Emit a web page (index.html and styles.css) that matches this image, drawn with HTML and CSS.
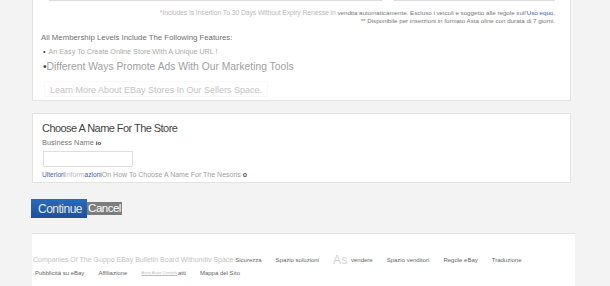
FILE: index.html
```html
<!DOCTYPE html>
<html>
<head>
  <meta charset="UTF-8">
  <title>Apri un negozio eBay</title>
  <link rel="stylesheet" href="styles.css">
</head>
<body>
  <div class="page">
    <!-- Membership levels (top of card is scrolled off) -->
    <div class="card card-levels">
      <div class="plans">
        <div class="plan plan-wide"></div>
        <div class="plan plan-narrow"></div>
      </div>

      <div class="note">
        <div><span class="faint">*Includes Is Insertion To 30 Days Without Expiry Renesse in</span> vendita automaticamente. Escluso i veicoli e soggetto alle regole sull'<a href="#">Uso equo.</a></div>
        <div>** Disponibile per inserzioni in formato Asta oline con durata di 7 giorni.</div>
      </div>

      <div class="features-title">All Membership Levels Include The Following Features:</div>
      <ul class="features">
        <li class="feature-small">An Easy To Create Online Store With A Unique URL !</li>
        <li class="feature-big">Different Ways Promote Ads With Our Marketing Tools</li>
      </ul>

      <div class="learn-more">Learn More About EBay Stores In Our Sellers Space.</div>
    </div>

    <!-- Store name form -->
    <div class="card card-name">
      <h2>Choose A Name For The Store</h2>
      <label class="field-label" for="storeName">Business Name <b>io</b></label>
      <input class="field-input" id="storeName" type="text">
      <div class="help">
        <a href="#">Ulteriori</a><span class="faint">Inform</span><a href="#">azioni</a><span>On How To Choose A Name For The Nesoris</span> <b>o</b>
      </div>
    </div>

    <div class="actions">
      <button class="btn btn-continue">Continue</button>
      <button class="btn btn-cancel">Cancel</button>
    </div>

    <!-- Footer links -->
    <div class="footer">
      <div class="footer-row">
        <span class="faint-big">Companies Of The Guppo EBay Bulletin Board Withundiv Space</span>
        <a href="#" class="fl">Sicurezza</a>
        <a href="#" class="fl">Spazio soluzioni</a>
        <span class="as">As</span>
        <a href="#" class="fl">vendere</a>
        <a href="#" class="fl">Spazio venditori</a>
        <a href="#" class="fl">Regole eBay</a>
        <a href="#" class="fl">Traduzione</a>
      </div>
      <div class="footer-row row-two">
        <a href="#" class="fl">Pubblicità su eBay</a>
        <a href="#" class="fl">Affiliazione</a>
        <span class="tiny">Aiuto Aiuto Contatti</span><a href="#" class="fl">atti</a>
        <a href="#" class="fl">Mappa del Sito</a>
      </div>
    </div>
  </div>
</body>
</html>
```

FILE: styles.css
```css
body {
  font-family: "Liberation Sans", Arial, sans-serif;
  margin: 0;
  color: #555;
  background-color: #f3f3f3;
  height: 286px;
  overflow: hidden;
}

a {
  color: #3a62ad;
  text-decoration: none;
}

.page {
  padding-left: 32px;
  width: 539px;
}

.card {
  background-color: white;
  border: 1px solid #e3e3e3;
}

.faint {
  color: #bbb;
}

/* membership card */

.card-levels {
  border-top: none;
  padding: 0 15px 3px 8px;
}

.plans {
  display: flex;
  margin-left: 8px;
}

.plan {
  border-bottom: 1px solid #dcdcdc;
}

.plan-wide {
  width: 335px;
}

.plan-narrow {
  width: 162px;
  margin-left: 12px;
}

.note {
  margin-top: 8px;
  font-size: 6.2px;
  line-height: 8px;
  text-align: right;
  color: #777;
}

.note .faint {
  font-size: 6.9px;
  letter-spacing: -0.12px;
}

.features-title {
  margin-top: 8px;
  font-size: 7.8px;
  line-height: 10px;
  color: #707070;
}

.features {
  list-style: none;
  margin: 4px 0 0 2px;
  padding: 0;
}

.features li::before {
  content: "\2022";
  color: #444;
}

.feature-small {
  font-size: 7.2px;
  line-height: 10px;
  color: #aaa;
}

.feature-small::before {
  margin-right: 3px;
}

.feature-big {
  margin-top: 4px;
  font-size: 10.3px;
  line-height: 12px;
  color: #a0a0a0;
}

.learn-more {
  display: inline-block;
  margin: 8px 0 0 3px;
  padding: 0 5px;
  height: 16px;
  line-height: 16px;
  font-size: 9px;
  color: #c4c4c4;
  border: 1px solid #f9f9f9;
  box-sizing: border-box;
}

/* store name card */

.card-name {
  margin-top: 12px;
  padding: 7px 10px 3px 9px;
}

.card-name h2 {
  margin: 0;
  font-size: 11px;
  line-height: 14px;
  font-weight: normal;
  letter-spacing: -0.55px;
  color: #444;
}

.field-label {
  display: block;
  margin-top: 3px;
  font-size: 7.4px;
  line-height: 10px;
  color: #777;
}

.field-label b {
  font-size: 6px;
  color: #333;
}

.field-input {
  display: block;
  margin: 3px 0 0 1px;
  width: 90px;
  height: 16px;
  box-sizing: border-box;
  border: 1px solid #dedede;
  padding: 0;
}

.help {
  margin-top: 4px;
  font-size: 7px;
  line-height: 8px;
  color: #a0a0a0;
}

.help a {
  font-size: 6.6px;
}

.help b {
  color: #555;
}

/* buttons */

.actions {
  display: flex;
  align-items: center;
  margin: 16px 0 0 -1px;
}

.btn {
  border: none;
  padding: 0;
  color: white;
  font-family: "Liberation Sans", Arial, sans-serif;
  letter-spacing: -0.5px;
}

.btn:focus {
  outline: none;
}

.btn-continue {
  width: 56px;
  height: 19px;
  padding-left: 7px;
  background: linear-gradient(#2a6bbb, #1a519c);
  font-size: 12px;
  text-align: left;
  color: #e8e8e8;
}

.btn-cancel {
  width: 35px;
  height: 13px;
  background-color: #7d7d7d;
  font-size: 11.5px;
  line-height: 13px;
}

/* footer */

.footer {
  margin-top: 15px;
  width: 543px;
  height: 60px;
  background-color: white;
  border-top: 1px solid #e4e4e4;
  padding-top: 19px;
  box-sizing: border-box;
}

.footer-row {
  display: flex;
  align-items: center;
  height: 13px;
  padding-left: 1px;
  font-size: 6px;
}

.row-two {
  padding-left: 3px;
}

.fl {
  color: #666;
  margin-right: 14px;
}

.faint-big {
  font-size: 7px;
  color: #c4c4c4;
  margin-right: 2px;
}

.as {
  font-size: 12px;
  color: #d2d2d2;
  margin-right: 3px;
  letter-spacing: 0.5px;
}

.tiny {
  font-size: 4.2px;
  color: #bbb;
  text-decoration: underline;
  margin-right: 1px;
}
```
